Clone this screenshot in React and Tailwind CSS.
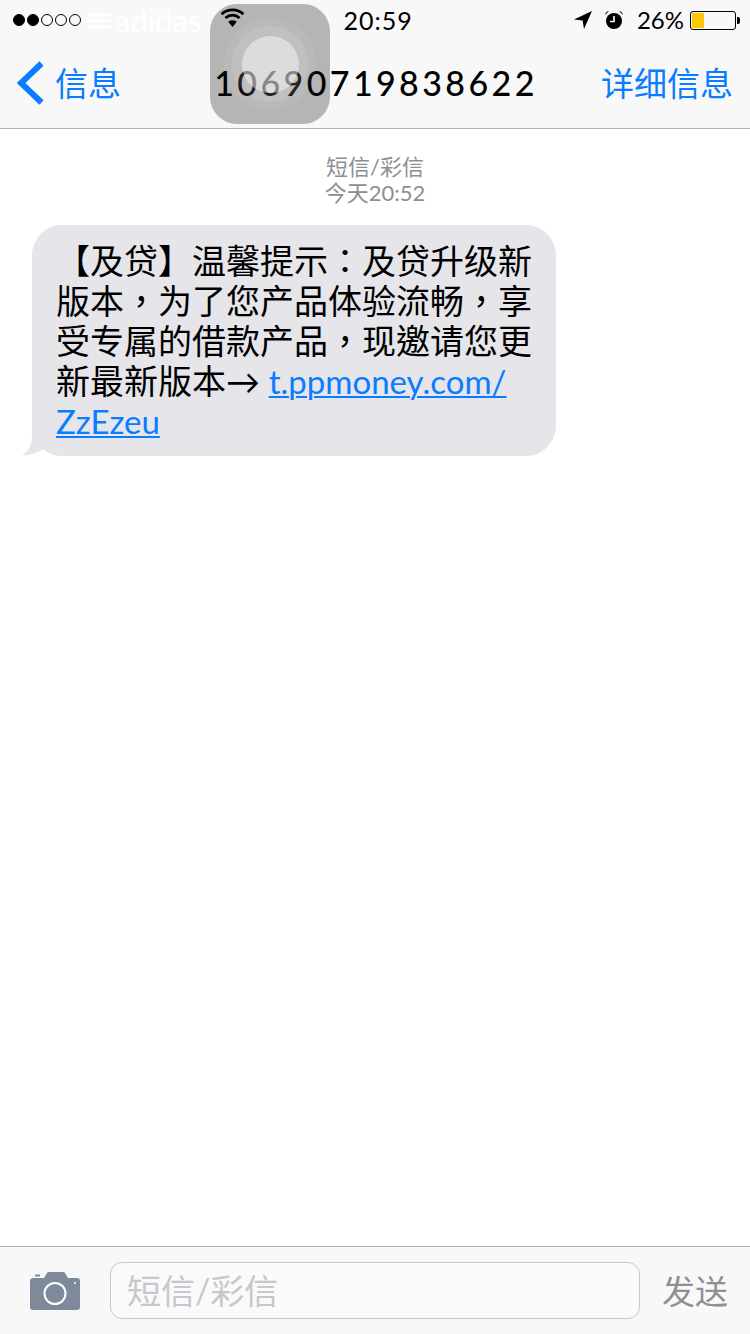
import React from "react";

const FONT = "font-['Lato','Noto_Sans_CJK_SC',sans-serif]";

function SignalDots() {
  return (
    <div className="flex items-center gap-[2px]">
      {[1, 1, 0, 0, 0].map((filled, i) => (
        <span
          key={i}
          className={
            filled
              ? "w-[12px] h-[12px] rounded-full border border-black bg-black"
              : "w-[12px] h-[12px] rounded-full border border-black bg-transparent"
          }
        />
      ))}
    </div>
  );
}

function Wifi() {
  return (
    <svg width="25" height="19" viewBox="0 0 26 20" fill="none" stroke="#000" strokeWidth="2.8">
      <path d="M1.5 6.5 C8 0.5 18 0.5 24.500 6.5" />
      <path d="M5.5 10.5 C10 6.5 16 6.5 20.500 10.5" />
      <path d="M13 20 L8.500 14.500 Q13 11.500 17.500 14.500 Z" fill="#000" stroke="none" />
    </svg>
  );
}

function LocationArrow() {
  return (
    <svg width="18" height="18" viewBox="0 0 18 18">
      <path d="M18 0 L0 8.5 L8.6 9.6 L10 18 Z" fill="#000" />
    </svg>
  );
}

function Alarm() {
  return (
    <svg width="20" height="20" viewBox="0 0 20 20">
      <circle cx="10" cy="11" r="8" fill="#000" />
      <path d="M1 5 Q1.5 1.5 5 1 Z M19 5 Q18.5 1.5 15 1 Z" fill="#000" />
      <path d="M10 6 V11.5 H6" stroke="#fff" strokeWidth="1.6" fill="none" />
    </svg>
  );
}

function Battery() {
  return (
    <div className="flex items-center">
      <div className="w-[46px] h-[19px] border border-black rounded-[3px] p-[1px] bg-transparent">
        <div className="w-[12px] h-full bg-[#fdc800]" />
      </div>
      <div className="w-[3px] h-[7px] bg-black rounded-r-[2px] ml-[1px]" />
    </div>
  );
}

function Camera() {
  return (
    <svg width="50" height="38" viewBox="0 0 50 38">
      <path
        d="M3 6 H14 L17 1 Q17.500 0 19 0 H33 Q34.500 0 35 1 L38 6 H47 Q50 6 50 9 V35 Q50 38 47 38 H3 Q0 38 0 35 V9 Q0 6 3 6 Z"
        fill="#7e8a9a"
      />
      <rect x="5" y="2.500" width="5" height="2" fill="#7e8a9a" />
      <circle cx="25" cy="21.500" r="10.500" fill="none" stroke="#fff" strokeWidth="2" />
      <circle cx="45" cy="11" r="1" fill="#fff" />
    </svg>
  );
}

export default function App() {
  return (
    <div className={`relative w-[750px] h-[1334px] flex flex-col bg-white overflow-hidden ${FONT}`}>
      {/* top bars */}
      <header className="h-[129px] shrink-0 bg-[#f8f8f8] border-b border-[#b2b2b2] flex flex-col">
        <div className="h-[40px] flex items-center justify-between pl-[13px] pr-[10px] text-black">
          <div className="flex-1 flex items-center">
            <SignalDots />
            <div className="ml-[7px] flex flex-col gap-[3px]">
              <span className="block w-[23px] h-[3px] bg-white" />
              <span className="block w-[23px] h-[3px] bg-white" />
              <span className="block w-[23px] h-[3px] bg-white" />
            </div>
            <span className="ml-[4px] text-[31px] leading-[40px] text-white">adidas</span>
            <div className="ml-[19px] -mt-[6px]">
              <Wifi />
            </div>
          </div>
          <span className="ml-[3px] text-[25px] leading-[40px] tracking-[1px]">20:59</span>
          <div className="flex-1 flex items-center justify-end">
            <LocationArrow />
            <div className="ml-[12px]">
              <Alarm />
            </div>
            <span className="ml-[13px] mr-[6px] text-[24px] leading-[40px]">26%</span>
            <Battery />
          </div>
        </div>
        <nav className="flex-1 flex items-center justify-between pl-[17px] pr-[17px] pb-[2px]">
          <div className="flex items-center text-[#0a7cff]">
            <svg width="27" height="44" viewBox="0 0 27 44" fill="none" stroke="#0a7cff" strokeWidth="6">
              <path d="M24.500 2.500 L4 22 L24.500 41.500" />
            </svg>
            <span className="ml-[11px] text-[33px] leading-[44px]">信息</span>
          </div>
          <h1 className="ml-[30px] text-[34px] leading-[44px] font-medium text-black tracking-[3.4px]">10690719838622</h1>
          <span className="text-[33px] leading-[44px] text-[#0a7cff]">详细信息</span>
        </nav>
      </header>

      {/* conversation */}
      <main className="flex-1 min-h-0 flex flex-col">
        <div className="pt-[25px] text-center text-[22px] leading-[26px] text-[#8e8e93]">
          <div>短信/彩信</div>
          <div>今天20:52</div>
        </div>
        <div className="relative ml-[32px] mt-[19px] w-[524px] h-[231px] bg-[#e5e5ea] rounded-[30px] pl-[24px] pt-[16px] text-[34px] leading-[40px] text-black font-['Lato','Noto_Sans_CJK_TC',sans-serif]">
          <svg className="absolute left-[-10px] bottom-0" width="24" height="34" viewBox="0 0 24 34">
            <path d="M10 0 V14 Q10 28 0 33.500 Q12 33 24 26 V0 Z" fill="#e5e5ea" />
          </svg>
          <p className="relative whitespace-nowrap">
            【及贷】温馨提示：及贷升级新
            <br />
            版本，为了您产品体验流畅，享
            <br />
            受专属的借款产品，现邀请您更
            <br />
            新最新版本→{" "}
            <a className="text-[33px] text-[#0a7cff] underline decoration-2 underline-offset-2" href="#">
              t.ppmoney.com/
              <br />
              ZzEzeu
            </a>
          </p>
        </div>
      </main>

      {/* compose bar */}
      <footer className="h-[88px] shrink-0 bg-[#f8f8f8] border-t border-[#b2b2b2] flex items-center pl-[30px] pr-[22px]">
        <Camera />
        <div className="ml-[30px] w-[530px] h-[57px] rounded-[12px] border border-[#c8c8cc] bg-[#fafafa] pl-[16px] flex items-center text-[34px] text-[#c7c7cd]">
          短信/彩信
        </div>
        <span className="ml-[22px] text-[33px] leading-[44px] text-[#8e8e93]">发送</span>
      </footer>

      {/* floating assistive button */}
      <div className="absolute left-[210px] top-[4px] w-[120px] h-[120px] rounded-[27px] bg-black/27 flex items-center justify-center">
        <div className="w-[92px] h-[92px] rounded-full bg-white/5 flex items-center justify-center">
          <div className="w-[76px] h-[76px] rounded-full bg-white/10 flex items-center justify-center">
            <div className="w-[57px] h-[57px] rounded-full bg-white/45" />
          </div>
        </div>
      </div>
    </div>
  );
}
